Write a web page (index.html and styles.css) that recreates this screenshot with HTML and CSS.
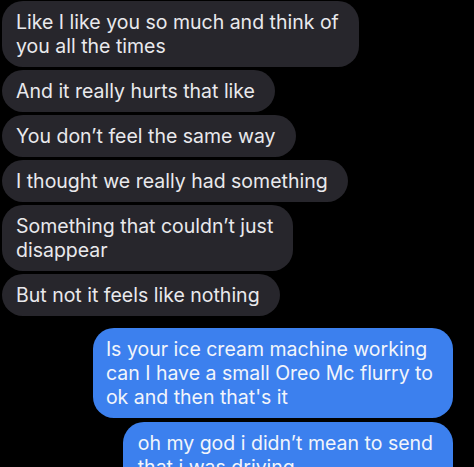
FILE: index.html
```html
<!DOCTYPE html>
<html lang="en">
<head>
<meta charset="utf-8">
<title>Messages</title>
<link rel="stylesheet" href="styles.css">
</head>
<body>
<main class="thread">
  <div class="bubble in">Like I like you so much and think of<br>you all the times</div>
  <div class="bubble in">And it really hurts that like</div>
  <div class="bubble in">You don’t feel the same way</div>
  <div class="bubble in">I thought we really had something</div>
  <div class="bubble in">Something that couldn’t just<br>disappear</div>
  <div class="bubble in">But not it feels like nothing</div>
  <div class="bubble out first">Is your ice cream machine working<br>can I have a small Oreo Mc flurry to<br>ok and then that's it</div>
  <div class="bubble out second">oh my god i didn’t mean to send<br>that i was driving</div>
</main>
</body>
</html>
```

FILE: styles.css
```css
html, body {
  margin: 0;
  padding: 0;
  background: #000;
  height: 100%;
  overflow: hidden;
}
.thread {
  display: flex;
  flex-direction: column;
  gap: 3px;
  padding: 1px 21px 0 2px;
  font-family: Inter, "Liberation Sans", sans-serif;
  font-size: 19.5px;
  line-height: 24px;
}
.bubble {
  padding: 9px 20px 9px 14px;
  border-radius: 21px;
  white-space: nowrap;
}
.in {
  align-self: flex-start;
  background: #27262c;
  color: #e9e9ec;
}
.out {
  align-self: flex-end;
  background: #3c80ee;
  color: #f2f5fb;
  padding-left: 13px;
}
.out.first {
  margin-top: 9px;
}
.out.second {
  margin-top: 1px;
  padding-left: 15px;
}
```
